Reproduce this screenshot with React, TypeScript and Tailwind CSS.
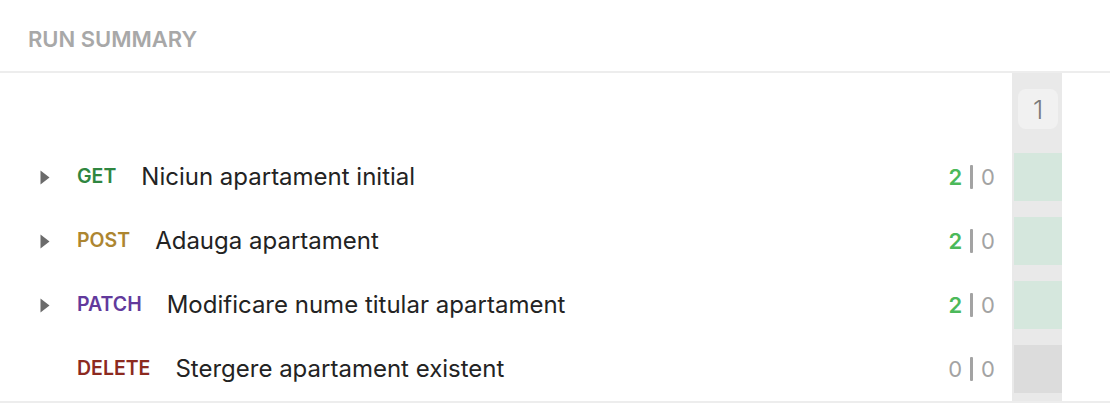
import React from 'react';

type Row = {
  method: 'GET' | 'POST' | 'PATCH' | 'DELETE';
  name: string;
  passed: number;
  failed: number;
  expandable: boolean;
};

const rows: Row[] = [
  { method: 'GET', name: 'Niciun apartament initial', passed: 2, failed: 0, expandable: true },
  { method: 'POST', name: 'Adauga apartament', passed: 2, failed: 0, expandable: true },
  { method: 'PATCH', name: 'Modificare nume titular apartament', passed: 2, failed: 0, expandable: true },
  { method: 'DELETE', name: 'Stergere apartament existent', passed: 0, failed: 0, expandable: false },
];

const methodColor: Record<Row['method'], string> = {
  GET: 'text-[#2f8640]',
  POST: 'text-[#ad8630]',
  PATCH: 'text-[#623a9c]',
  DELETE: 'text-[#8c2a1f]',
};

const Caret = () => (
  <svg width="10" height="15" viewBox="0 0 10 15" className="text-[#6b6b6b]">
    <path d="M0.5 0.5 L9.5 7.5 L0.5 14.5 Z" fill="currentColor" />
  </svg>
);

const App: React.FC = () => {
  return (
    <div className="w-[1110px] h-[412px] bg-white font-['Inter',sans-serif]">
      {/* Header */}
      <div className="h-[73px] flex items-center pl-[28px] pt-[8px] border-b-2 border-[#ededed]">
        <h2 className="text-[22px] font-semibold text-[#a8a8a8]">RUN SUMMARY</h2>
      </div>

      {/* Body */}
      <div className="flex h-[330px] border-b-2 border-[#ededed]">
        {/* Requests */}
        <div className="flex-1 flex flex-col gap-4 pt-[80px] pr-[17px]">
          {rows.map((r) => (
            <div key={r.method} className="h-12 flex items-center pl-[40px]">
              <div className="w-[10px] flex items-center">{r.expandable && <Caret />}</div>
              <span className={`ml-[27px] text-[19.5px] font-semibold ${methodColor[r.method]}`}>{r.method}</span>
              <span className="ml-[25px] text-[24px] text-[#232323]">{r.name}</span>
              <div className="ml-auto flex items-center text-[22px] text-[#a3a3a3]">
                <span className={r.passed > 0 ? 'text-[#4cb95a] font-semibold' : ''}>{r.passed}</span>
                <span className="mx-[8px] w-[3px] h-[24px] bg-[#a3a3a3] rounded-[1px]" />
                <span>{r.failed}</span>
              </div>
            </div>
          ))}
        </div>

        {/* Iteration strip */}
        <div className="w-[50px] bg-[#e9e9e9] pl-[2px] flex flex-col">
          <div className="h-[80px] flex items-start justify-center pt-4">
            <div className="w-10 h-10 rounded-lg bg-[#f1f1f1] flex items-center justify-center text-[26px] font-light text-[#7a7a7a]">
              1
            </div>
          </div>
          <div className="flex flex-col gap-4">
            {rows.map((r) => (
              <div key={r.method} className={`h-12 ${r.passed > 0 ? 'bg-[#d5e7dd]' : 'bg-[#dcdcdc]'}`} />
            ))}
          </div>
        </div>
        <div className="w-[48px]" />
      </div>
    </div>
  );
};

export default App;
